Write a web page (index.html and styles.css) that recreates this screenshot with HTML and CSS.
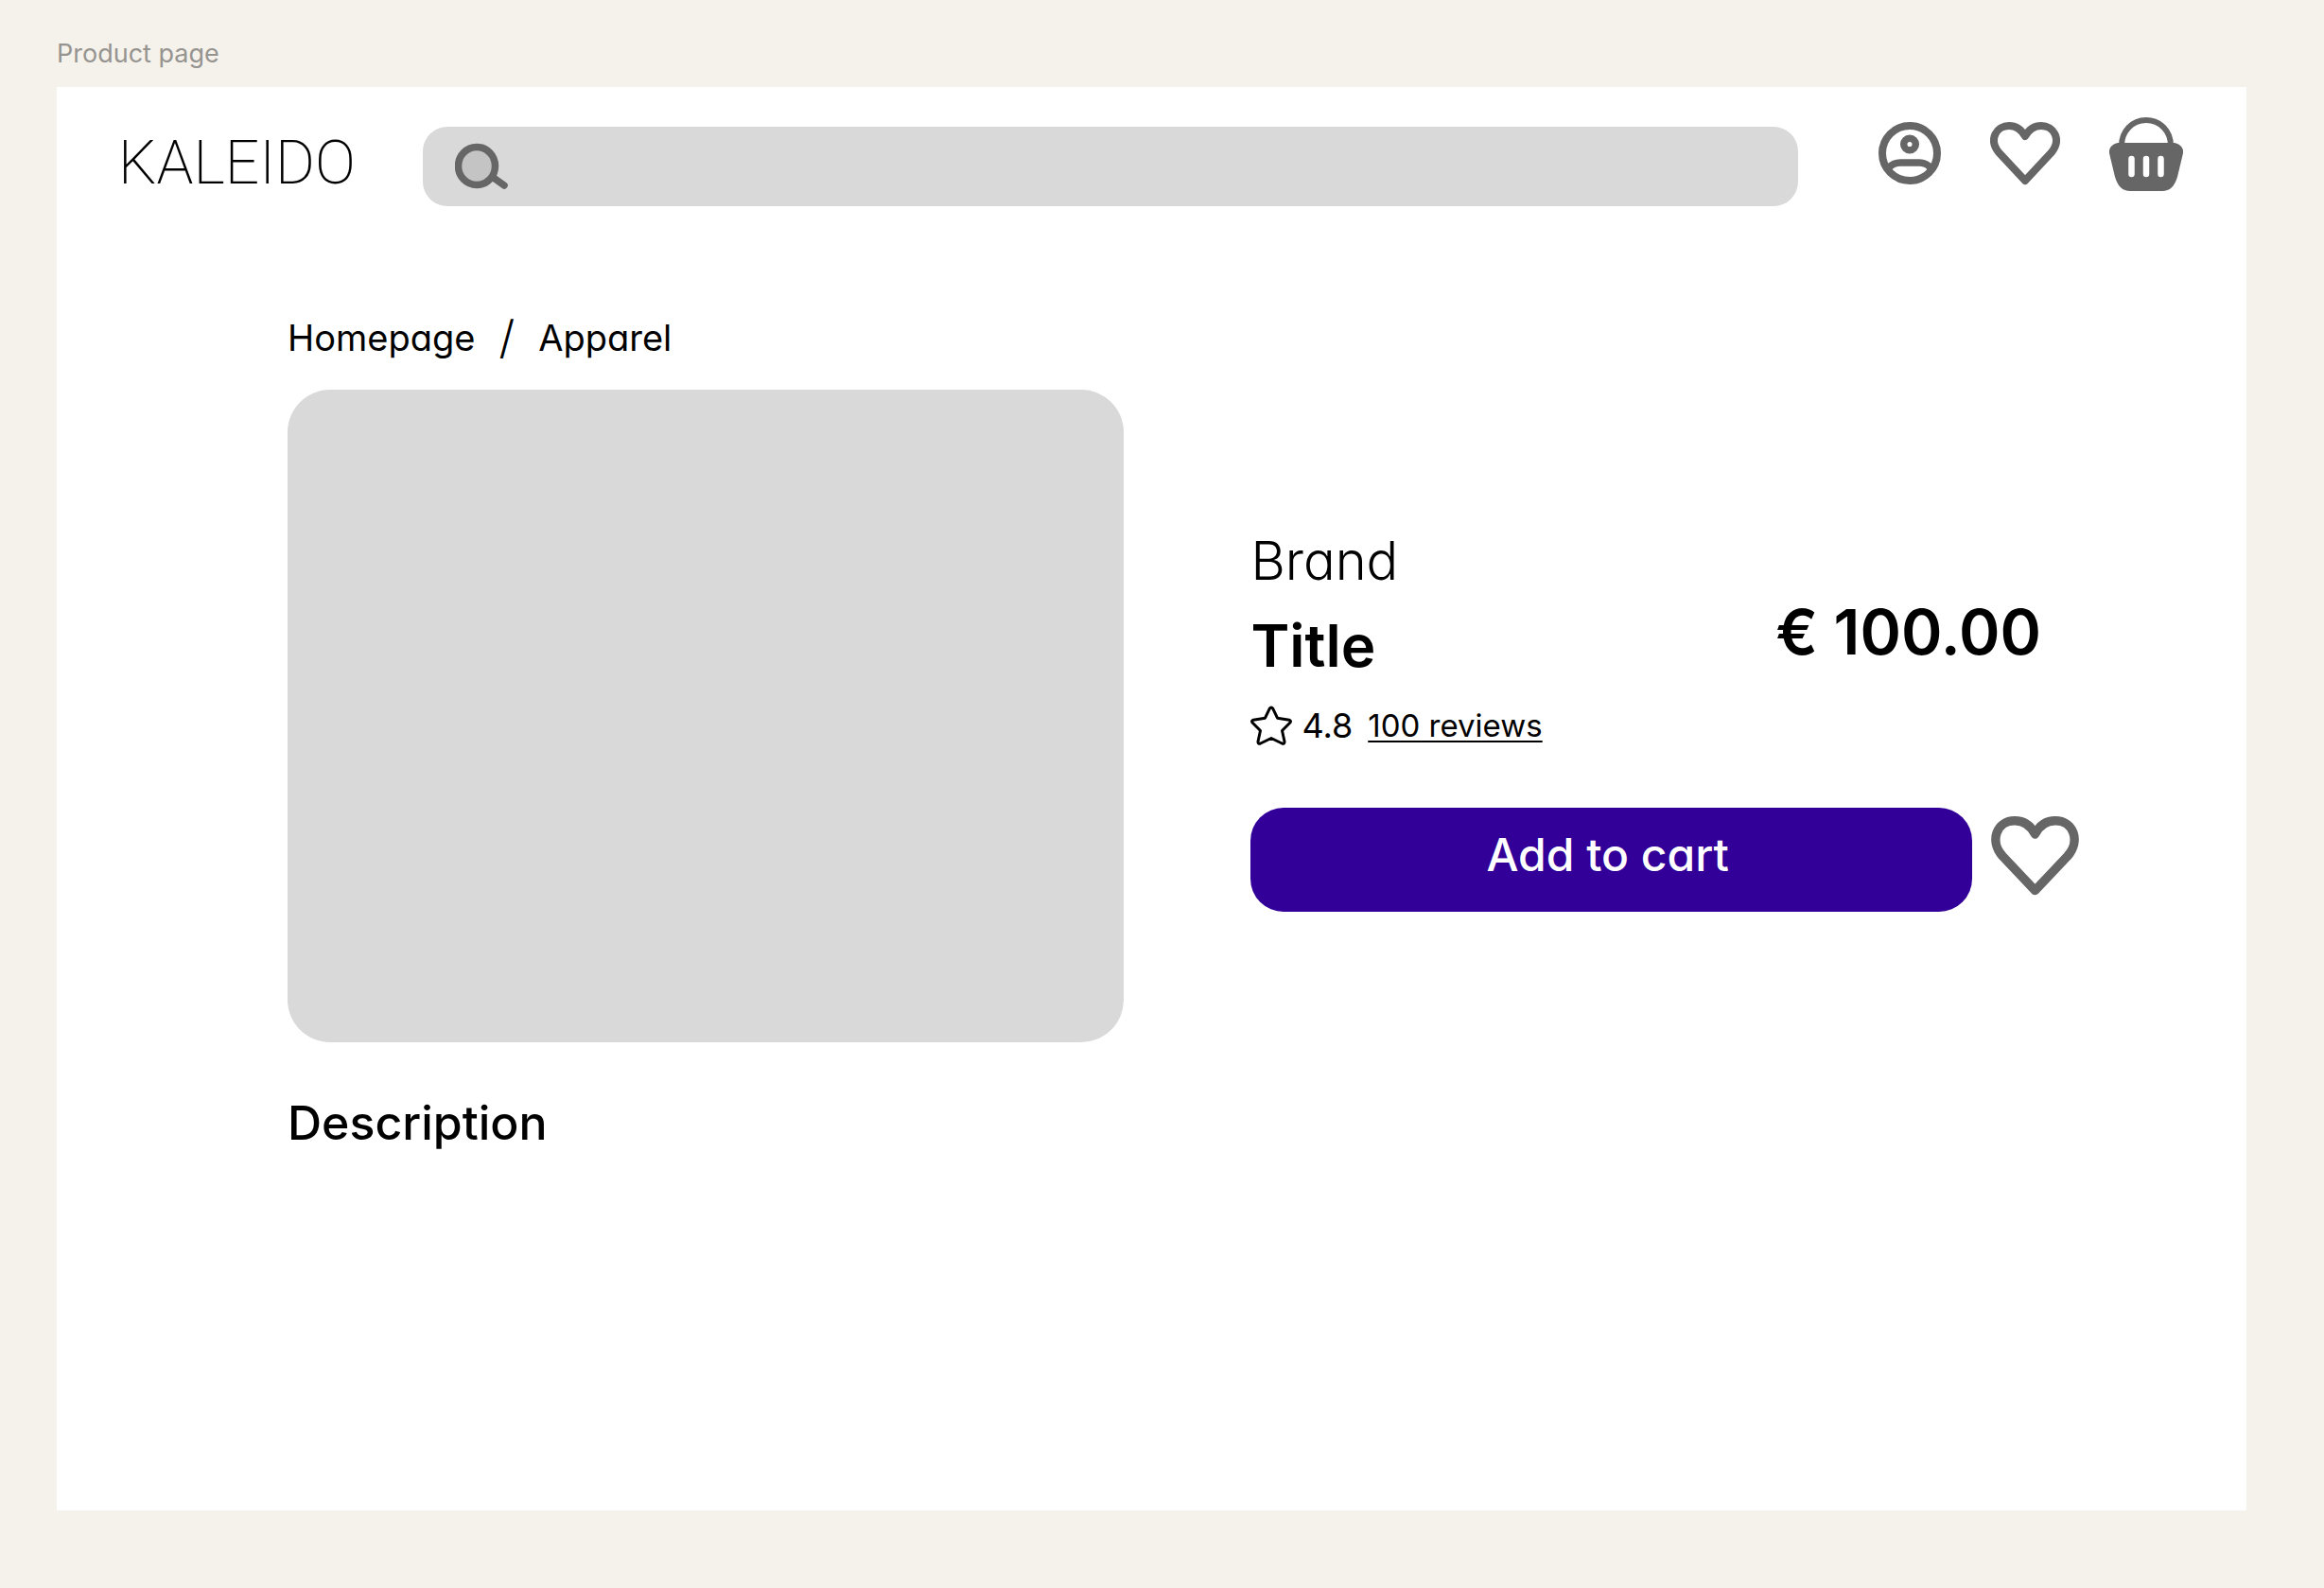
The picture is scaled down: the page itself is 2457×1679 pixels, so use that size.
FILE: index.html
```
<!DOCTYPE html>
<html lang="en">
<head>
  <meta charset="UTF-8">
  <title>Product page - Kaleido</title>
  <link rel="stylesheet" href="styles.css">
</head>
<body>
  <p class="frame-label">Product page</p>

  <div class="page">
    <header class="header">
      <a class="logo" href="#">KALEIDO</a>

      <form class="search" role="search">
        <label class="search-label" for="search" aria-label="Search">
          <svg class="search-icon" viewBox="0 0 56 50">
            <path d="M38 35L52 45" stroke="#666" stroke-width="7.500" stroke-linecap="round"/>
            <ellipse cx="23" cy="24.500" rx="19.500" ry="20" fill="#c4c4c4" stroke="#666" stroke-width="7.500"/>
          </svg>
        </label>
        <input class="search-input" type="text" id="search" name="search">
      </form>

      <nav class="header-icons">
        <a class="icon-user" href="#" aria-label="Account">
          <svg viewBox="0 0 66 66" fill="none" stroke="#666" stroke-width="8">
            <circle cx="33" cy="33" r="29"/>
            <circle cx="33" cy="23.500" r="6.300" stroke-width="7.500"/>
            <path d="M11 48Q16 43 23 43H43Q50 43 55 48" stroke-width="7.500"/>
          </svg>
        </a>
        <a class="icon-heart" href="#" aria-label="Favourites">
          <svg viewBox="0 0 74 67" fill="none" stroke="#666" stroke-width="8" stroke-linejoin="round">
            <path d="M37 62L9 32C-2 18 7 4 20 4C28 4 33 8 37 15C41 8 46 4 54 4C67 4 76 18 65 32Z"/>
          </svg>
        </a>
        <a class="icon-basket" href="#" aria-label="Basket">
          <svg viewBox="0 0 78 78" fill="#666">
            <path d="M13 30C13 15 24 3 39 3C54 3 65 15 65 30" fill="none" stroke="#666" stroke-width="6"/>
            <path d="M9 27H69C74 28 79 32 78 38L72 63C69 73 64 78 56 78H22C14 78 9 73 6 63L0 38C-1 32 4 28 9 27Z"/>
            <path d="M23.500 44V60M39 44V60M54.500 44V60" stroke="#fff" stroke-width="6.500" stroke-linecap="round"/>
          </svg>
        </a>
      </nav>
    </header>

    <main class="content">
      <nav class="breadcrumb">
        <a href="#">Homepage</a>
        <span class="divider">/</span>
        <a href="#">Apparel</a>
      </nav>

      <div class="product">
        <div class="product-image"></div>

        <div class="product-info">
          <div class="product-head">
            <div>
              <p class="brand">Brand</p>
              <h1 class="title">Title</h1>
            </div>
            <p class="price">€ 100.00</p>
          </div>

          <div class="rating">
            <svg class="star" viewBox="0 0 44 42" fill="none" stroke="#000" stroke-width="3" stroke-linejoin="round">
              <path d="M20.300 3.200Q22 .7 23.700 3.200L28.500 13.200L41 15.200Q43.500 16 41.700 18.300L33.500 26.500L36 38Q36.200 41 33.300 40L22 34.500L10.700 40Q7.800 41 8 38L10.500 26.500L2.300 18.300Q.5 16 3 15.200L15.500 13.200Z"/>
            </svg>
            <span class="score">4.8</span>
            <a class="reviews" href="#">100 reviews</a>
          </div>

          <div class="actions">
            <button class="add-to-cart" type="button">Add to cart</button>
            <button class="save" type="button" aria-label="Add to favourites">
              <svg viewBox="0 0 93 84" fill="none" stroke="#666" stroke-width="9.500" stroke-linejoin="round">
                <path d="M46.500 78.500L12 42C-2 26 6 4.800 25 4.800C35 4.800 42 10 46.500 19C51 10 58 4.800 68 4.800C87 4.800 95 26 81 42Z"/>
              </svg>
            </button>
          </div>
        </div>
      </div>

      <h2 class="description">Description</h2>
    </main>
  </div>
</body>
</html>
```
FILE: styles.css
```
* {
  box-sizing: border-box;
}

body {
  margin: 0;
  min-height: 100vh;
  padding: 41px 82px 82px 60px;
  display: flex;
  flex-direction: column;
  background: #f5f2eb;
  color: #000;
  font-family: Inter, "Open Sans", sans-serif;
}

p, h1, h2 {
  margin: 0;
}

a {
  color: inherit;
  text-decoration: none;
}

svg {
  display: block;
  width: 100%;
}

.frame-label {
  height: 51px;
  color: #959490;
  font-size: 27px;
  line-height: 32px;
}

.page {
  flex: 1;
  background: #fff;
  font-feature-settings: "cv11";
}

/* header */

.header {
  display: flex;
  align-items: flex-start;
  padding: 32px 67px 0 65px;
}

.logo {
  width: 322px;
  padding-top: 9px;
  font-family: Roboto, Inter, sans-serif;
  font-size: 64px;
  font-weight: 200;
  line-height: 80px;
}

.search {
  flex: 1;
  display: flex;
  align-items: center;
  height: 84px;
  margin-top: 10px;
  padding: 0 34px;
  border-radius: 26px;
  background: #d9d9d9;
}

.search-icon {
  width: 56px;
}

.search-input {
  flex: 1;
  height: 84px;
  padding: 0 16px;
  border: none;
  outline: none;
  background: transparent;
  font-family: inherit;
  font-size: 36px;
}

.header-icons {
  display: flex;
  gap: 52px;
  margin-left: 85px;
}

.icon-user {
  width: 66px;
  padding-top: 5px;
}

.icon-heart {
  width: 74px;
  padding-top: 5px;
}

.icon-basket {
  width: 78px;
}

/* product */

.content {
  padding: 111px 177px 0 244px;
}

.breadcrumb {
  display: flex;
  align-items: center;
  gap: 25px;
  margin-bottom: 27px;
  font-size: 38px;
  line-height: 56px;
}

.divider {
  font-size: 48px;
  font-weight: 300;
}

.product {
  display: grid;
  grid-template-columns: 101fr 100fr;
  gap: 134px;
}

.product-image {
  aspect-ratio: 884 / 690;
  border-radius: 45px;
  background: #d9d9d9;
}

.product-info {
  padding-top: 149px;
}

.product-head {
  display: flex;
  align-items: flex-end;
  justify-content: space-between;
  padding-right: 40px;
}

.brand {
  font-size: 56px;
  font-weight: 300;
  line-height: 64px;
}

.title {
  margin-top: 22px;
  font-size: 62px;
  font-weight: 600;
  line-height: 72px;
}

.price {
  padding-bottom: 15px;
  font-size: 66px;
  font-weight: 600;
  line-height: 72px;
}

.rating {
  display: flex;
  align-items: center;
  margin-top: 24px;
  line-height: 48px;
}

.star {
  width: 44px;
  margin-right: 10px;
}

.score {
  margin-right: 16px;
  font-size: 36px;
}

.reviews {
  font-size: 33px;
  text-decoration: underline;
  text-decoration-thickness: 2px;
  text-underline-offset: 4px;
}

.actions {
  display: flex;
  align-items: flex-start;
  gap: 20px;
  margin-top: 63px;
}

.add-to-cart {
  flex: 1;
  height: 110px;
  padding: 0 8px 12px 0;
  border: none;
  border-radius: 35px;
  background: #320099;
  color: #fff;
  font-family: inherit;
  font-feature-settings: inherit;
  font-size: 48px;
  font-weight: 500;
  cursor: pointer;
}

.save {
  width: 93px;
  margin-top: 9px;
  padding: 0;
  border: none;
  background: none;
  cursor: pointer;
}

.description {
  margin-top: 55px;
  font-size: 50px;
  font-weight: 500;
  line-height: 60px;
}
```
